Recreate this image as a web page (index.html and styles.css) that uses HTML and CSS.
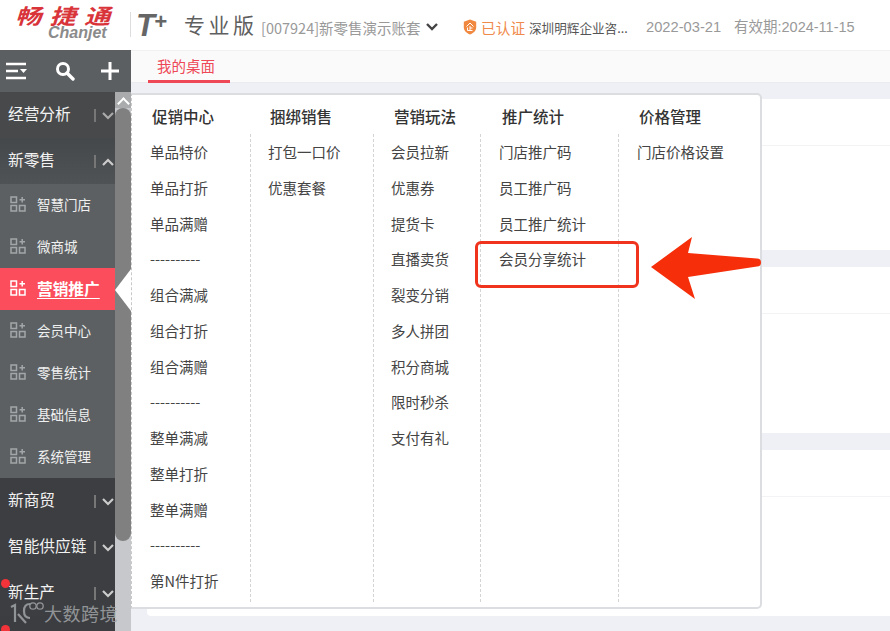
FILE: index.html
```html
<!DOCTYPE html>
<html lang="zh-CN">
<head>
<meta charset="utf-8">
<title>畅捷通 T+ 专业版</title>
<link rel="stylesheet" href="styles.css">
</head>
<body>
<div class="app">
  <header class="topbar">
    <div class="logo">
      <div class="logo-cn">畅捷通</div>
      <div class="logo-en">Chanjet</div>
    </div>
    <div class="brand-sep"></div>
    <div class="tplus">T<span class="tplus-mark">+</span></div>
    <div class="edition">专业版</div>
    <div class="account">[007924]新零售演示账套</div>
    <svg class="chev-account" width="14" height="10" viewBox="0 0 14 10"><path d="M2 2l5 5 5-5" fill="none" stroke="#444" stroke-width="2.4"/></svg>
    <svg class="shield" width="14" height="16" viewBox="0 0 14 16"><path d="M7 .5l6.2 2.2v5.6c0 3.400-2.800 5.900-6.200 7.200C3.600 14.200.8 11.700.8 8.300V2.700z" fill="#f0883f"/><path d="M3.500 7.500L7 4l3.500 3.500M7 7v4.500M7 9h2.500M4.500 8.500v3h5" fill="none" stroke="#fff" stroke-width="1"/></svg>
    <div class="certified">已认证</div>
    <div class="company">深圳明辉企业咨...</div>
    <div class="date">2022-03-21</div>
    <div class="expire">有效期:2024-11-15</div>
  </header>

  <div class="workspace">
    <aside class="side">
      <div class="tools">
        <svg width="24" height="20" viewBox="0 0 24 20"><path d="M1 3h20M1 10h12M1 17h20" stroke="#fff" stroke-width="2.400" fill="none"/><path d="M15 8h7l-3.500 4z" fill="#fff"/></svg>
        <svg width="20" height="20" viewBox="0 0 20 20"><circle cx="8" cy="8" r="5.500" fill="none" stroke="#fff" stroke-width="3"/><path d="M12 12l6 6" stroke="#fff" stroke-width="3.400" stroke-linecap="round"/></svg>
        <svg width="20" height="20" viewBox="0 0 20 20"><path d="M10 1v18M1 10h18" stroke="#fff" stroke-width="3"/></svg>
      </div>
      <div class="group"><span class="group-name">经营分析</span><span class="group-bar"></span><svg class="chev" width="12" height="8" viewBox="0 0 12 8"><path d="M1 1l5 5 5-5" fill="none" stroke="#aaa" stroke-width="2.200"/></svg></div>
      <div class="group group-open"><span class="group-name">新零售</span><span class="group-bar"></span><svg class="chev" width="12" height="8" viewBox="0 0 12 8"><path d="M1 7l5-5 5 5" fill="none" stroke="#ccc" stroke-width="2.200"/></svg></div>
      <div class="sub"><svg class="sub-icon" width="16" height="16" viewBox="0 0 16 16"><path d="M1 1h5.500v5.500H1zM1 9.500h5.500V15H1zM9.500 9.500H15V15H9.500zM12.200 1v5.500M9.500 3.700H15" fill="none" stroke="currentColor" stroke-width="1.500"/></svg><span>智慧门店</span></div>
      <div class="sub"><svg class="sub-icon" width="16" height="16" viewBox="0 0 16 16"><path d="M1 1h5.500v5.500H1zM1 9.500h5.500V15H1zM9.500 9.500H15V15H9.500zM12.200 1v5.500M9.500 3.700H15" fill="none" stroke="currentColor" stroke-width="1.500"/></svg><span>微商城</span></div>
      <div class="sub sub-active"><svg class="sub-icon" width="16" height="16" viewBox="0 0 16 16"><path d="M1 1h5.500v5.500H1zM1 9.500h5.500V15H1zM9.500 9.500H15V15H9.500zM12.200 1v5.500M9.500 3.700H15" fill="none" stroke="currentColor" stroke-width="1.500"/></svg><span>营销推广</span></div>
      <div class="sub"><svg class="sub-icon" width="16" height="16" viewBox="0 0 16 16"><path d="M1 1h5.500v5.500H1zM1 9.500h5.500V15H1zM9.500 9.500H15V15H9.500zM12.200 1v5.500M9.500 3.700H15" fill="none" stroke="currentColor" stroke-width="1.500"/></svg><span>会员中心</span></div>
      <div class="sub"><svg class="sub-icon" width="16" height="16" viewBox="0 0 16 16"><path d="M1 1h5.500v5.500H1zM1 9.500h5.500V15H1zM9.500 9.500H15V15H9.500zM12.200 1v5.500M9.500 3.700H15" fill="none" stroke="currentColor" stroke-width="1.500"/></svg><span>零售统计</span></div>
      <div class="sub"><svg class="sub-icon" width="16" height="16" viewBox="0 0 16 16"><path d="M1 1h5.500v5.500H1zM1 9.500h5.500V15H1zM9.500 9.500H15V15H9.500zM12.200 1v5.500M9.500 3.700H15" fill="none" stroke="currentColor" stroke-width="1.500"/></svg><span>基础信息</span></div>
      <div class="sub"><svg class="sub-icon" width="16" height="16" viewBox="0 0 16 16"><path d="M1 1h5.500v5.500H1zM1 9.500h5.500V15H1zM9.500 9.500H15V15H9.500zM12.200 1v5.500M9.500 3.700H15" fill="none" stroke="currentColor" stroke-width="1.500"/></svg><span>系统管理</span></div>
      <div class="group group-low"><span class="group-name">新商贸</span><span class="group-bar"></span><svg class="chev" width="12" height="8" viewBox="0 0 12 8"><path d="M1 1l5 5 5-5" fill="none" stroke="#ccc" stroke-width="2.200"/></svg></div>
      <div class="group group-low"><span class="group-name">智能供应链</span><span class="group-bar"></span><svg class="chev" width="12" height="8" viewBox="0 0 12 8"><path d="M1 1l5 5 5-5" fill="none" stroke="#ccc" stroke-width="2.200"/></svg></div>
      <div class="group group-low"><span class="group-name">新生产</span><span class="group-bar"></span><svg class="chev" width="12" height="8" viewBox="0 0 12 8"><path d="M1 1l5 5 5-5" fill="none" stroke="#ccc" stroke-width="2.200"/></svg></div>
    </aside>

    <div class="rail">
      <div class="rail-cap"></div>
      <div class="rail-top"></div>
      <div class="rail-track">
        <div class="rail-thumb"></div>
      </div>
    </div>

    <main class="main">
      <div class="tabs"><div class="tab">我的桌面</div></div>
      <div class="cards">
        <section class="card card-first"><div class="card-head"></div></section>
        <section class="card"><div class="card-head"></div></section>
        <section class="card"><div class="card-head"></div></section>
      </div>
    </main>

    <nav class="menu">
      <div class="col col-1">
        <h3 class="col-title">促销中心</h3>
        <ul class="col-list">
          <li>单品特价</li><li>单品打折</li><li>单品满赠</li><li>----------</li>
          <li>组合满减</li><li>组合打折</li><li>组合满赠</li><li>----------</li>
          <li>整单满减</li><li>整单打折</li><li>整单满赠</li><li>----------</li>
          <li>第N件打折</li>
        </ul>
      </div>
      <div class="col col-2">
        <h3 class="col-title">捆绑销售</h3>
        <ul class="col-list"><li>打包一口价</li><li>优惠套餐</li></ul>
      </div>
      <div class="col col-3">
        <h3 class="col-title">营销玩法</h3>
        <ul class="col-list">
          <li>会员拉新</li><li>优惠券</li><li>提货卡</li><li>直播卖货</li><li>裂变分销</li>
          <li>多人拼团</li><li>积分商城</li><li>限时秒杀</li><li>支付有礼</li>
        </ul>
      </div>
      <div class="col col-4">
        <h3 class="col-title">推广统计</h3>
        <ul class="col-list"><li>门店推广码</li><li>员工推广码</li><li>员工推广统计</li><li>会员分享统计</li></ul>
      </div>
      <div class="col col-5">
        <h3 class="col-title">价格管理</h3>
        <ul class="col-list"><li>门店价格设置</li></ul>
      </div>
    </nav>

    <div class="pointer"></div>
    <div class="callout"></div>
    <svg class="arrow" width="120" height="64" viewBox="0 0 120 64"><path d="M1 31L42 1l-4 16 69 5.500a4 4 0 0 1 0 8L38 41l7 22z" fill="#f62e0a"/></svg>
    <span class="dot dot-a"></span>
    <span class="dot dot-b"></span>
    <div class="mark">
      <svg width="36" height="26" viewBox="0 0 36 26"><path d="M3 7l4-2v17M22 4c-4 0-6 3-6 7s2 7 6 7M10 14l8 9" fill="none" stroke="#9b9ea0" stroke-width="2.200"/><circle cx="25" cy="6" r="3.200" fill="none" stroke="#9b9ea0" stroke-width="1.300"/><circle cx="32" cy="6" r="3.200" fill="none" stroke="#9b9ea0" stroke-width="1.300"/></svg>
      <span class="mark-text">大数跨境</span>
    </div>
  </div>
</div>
</body>
</html>
```
FILE: styles.css
```css
* { box-sizing: border-box; }
html, body { margin: 0; padding: 0; height: 100%; overflow: hidden; }
body { font-family: "Noto Sans CJK SC", "Liberation Sans", sans-serif; background: #fff; color: #333; }
.app { height: 631px; display: flex; flex-direction: column; }

/* top bar */
.topbar { height: 50px; flex: none; display: flex; align-items: center; background: #fff; padding-top: 4px; }
.logo { width: 130px; padding-left: 15px; flex: none; display: flex; flex-direction: column; align-items: flex-start; margin-bottom: 9px; }
.logo-cn { font-size: 21px; line-height: 20px; font-weight: 700; font-style: italic; letter-spacing: 6.600px; color: #d8343a; white-space: nowrap; transform: scaleX(1.25); transform-origin: left center; }
.logo-en { font-family: "Liberation Sans", sans-serif; font-size: 16px; line-height: 15px; font-style: italic; font-weight: 700; color: #8b8b8b; margin-left: 33px; }
.brand-sep { width: 1px; height: 25px; background: #ddd; flex: none; margin-bottom: 6px; }
.tplus { width: 53px; padding-left: 5px; font-family: "Liberation Sans", sans-serif; font-size: 31px; line-height: 30px; font-weight: 700; font-style: italic; color: #666; flex: none; white-space: nowrap; margin-bottom: 6px; }
.tplus-mark { font-size: 22px; vertical-align: 7px; margin-left: -1px; }
.edition { font-size: 21px; line-height: 26px; letter-spacing: 3.500px; color: #5f5f5f; width: 77px; flex: none; white-space: nowrap; margin-bottom: 6px; }
.account { font-size: 14.500px; color: #999; width: 164px; flex: none; white-space: nowrap; }
.chev-account { flex: none; margin-right: 24px; }
.shield { flex: none; margin-right: 4px; }
.certified { font-size: 14.700px; color: #f08a4b; width: 48px; flex: none; white-space: nowrap; }
.company { font-size: 12.600px; color: #555; width: 117px; flex: none; white-space: nowrap; }
.date { font-family: "Liberation Sans", sans-serif; font-size: 14.700px; line-height: 20px; color: #999; width: 88px; flex: none; white-space: nowrap; }
.expire { font-family: "Liberation Sans", "Noto Sans CJK SC", sans-serif; font-size: 14.500px; line-height: 20px; color: #999; flex: none; white-space: nowrap; }

.workspace { flex: 1; min-height: 0; display: flex; position: relative; }

/* sidebar */
.side { width: 115px; flex: none; display: flex; flex-direction: column; background: #3c3d40; overflow: visible; }
.tools { width: 131px; height: 42px; flex: none; background: #5c5f61; display: flex; align-items: center; gap: 25.500px; padding-left: 5px; position: relative; z-index: 1; }
.group { height: 46px; flex: none; display: flex; align-items: center; padding: 0 0 4px 8px; color: #f2f2f2; font-size: 15.700px; background: #47494b; position: relative; }
.group-open { background: linear-gradient(#45484a, #505355); }
.group-low { background: #3d3e41; }
.group-name { white-space: nowrap; }
.group-bar { position: absolute; left: 94px; top: 17px; width: 2px; height: 13px; background: #777; }
.chev { position: absolute; left: 102px; top: 20px; }
.sub { height: 42px; flex: none; display: flex; align-items: center; gap: 11px; padding: 0 0 2px 10px; background: #5c6063; color: #f0f0f0; font-size: 13.500px; white-space: nowrap; }
.sub-icon { color: #a3a6a8; flex: none; }
.sub-active { background: #fb4d5c; color: #fff; font-weight: 700; font-size: 15.700px; }
.sub-active .sub-icon { color: #fff; }
.sub-active span { text-decoration: underline; text-underline-offset: 3px; }

/* scrollbar rail */
.rail { width: 16px; flex: none; background: #c6c8cb; display: flex; flex-direction: column; }
.rail-cap { height: 42px; flex: none; background: #5c5f61; }
.rail-top { height: 16px; flex: none; background: #a9abad; position: relative; }
.rail-top::after { content: ""; position: absolute; left: 4px; top: 7px; width: 7px; height: 7px; border-left: 2px solid #fff; border-top: 2px solid #fff; transform: rotate(45deg); }
.rail-track { flex: 1; }
.rail-thumb { height: 433px; background: #808080; border-radius: 8px; }

/* main */
.main { flex: 1; min-width: 0; display: flex; flex-direction: column; background: #eff0f5; overflow: hidden; }
.tabs { height: 33px; flex: none; background: #fafafb; border-top: 1px solid #f1f1f3; border-bottom: 1px solid #eaebef; padding-left: 17px; display: flex; }
.tab { width: 82px; height: 32px; padding: 5px 0 0 9px; font-size: 14.500px; line-height: 20px; color: #ee4856; border-bottom: 3px solid #ee4856; white-space: nowrap; }
.cards { flex: 1; display: flex; flex-direction: column; gap: 17px; padding: 16px 0 0 16px; }
.card { height: 166px; flex: none; background: #fff; border-radius: 4px 0 0 4px; }
.card-first { height: 151px; }
.card-head { height: 47px; border-bottom: 1px solid #f3f3f6; }

/* dropdown */
.menu { position: absolute; left: 131px; top: 43px; width: 631px; height: 516px; background: #fff; border: 2px solid #dcdde0; border-left: 1px dashed #c8c8c8; border-radius: 0 5px 5px 0; display: flex; padding-top: 3px; z-index: 2; }
.col { display: flex; flex-direction: column; flex: none; }
.col-1 { width: 119px; }
.col-2 { width: 123px; }
.col-3 { width: 107px; }
.col-4 { width: 138px; }
.col-5 { width: 140px; }
.col-title { margin: 0; height: 36px; line-height: 36px; padding-left: 20px; font-size: 15.500px; font-weight: 500; color: #333; white-space: nowrap; }
.col-2 .col-title { padding-left: 19px; }
.col-4 .col-title { padding-left: 21px; }
.col-list { list-style: none; margin: 0 0 5px; padding: 0 0 0 18px; flex: 1; border-right: 1px dashed #d4d4d4; }
.col-2 .col-list, .col-3 .col-list { padding-left: 17px; }
.col-5 .col-list { border-right: 0; }
.col-list li { height: 35.750px; line-height: 35.750px; font-size: 14.500px; color: #444; white-space: nowrap; }

/* annotations over the menu */
.pointer { position: absolute; left: 115px; top: 219px; width: 0; height: 0; border-top: 21px solid transparent; border-bottom: 21px solid transparent; border-right: 16px solid #fff; z-index: 3; }
.callout { position: absolute; left: 475px; top: 191px; width: 164px; height: 47px; border: 3px solid #f0331c; border-radius: 6px; z-index: 3; }
.arrow { position: absolute; left: 650px; top: 186px; z-index: 3; }
.dot { position: absolute; left: 1px; width: 9px; height: 9px; border-radius: 50%; background: #f2333a; z-index: 3; }
.dot-a { top: 529px; }
.dot-b { top: 575px; }
.mark { position: absolute; left: 8px; top: 550px; display: flex; align-items: center; z-index: 3; opacity: .9; }
.mark-text { font-size: 18px; letter-spacing: .5px; color: #9b9ea0; white-space: nowrap; }
```
